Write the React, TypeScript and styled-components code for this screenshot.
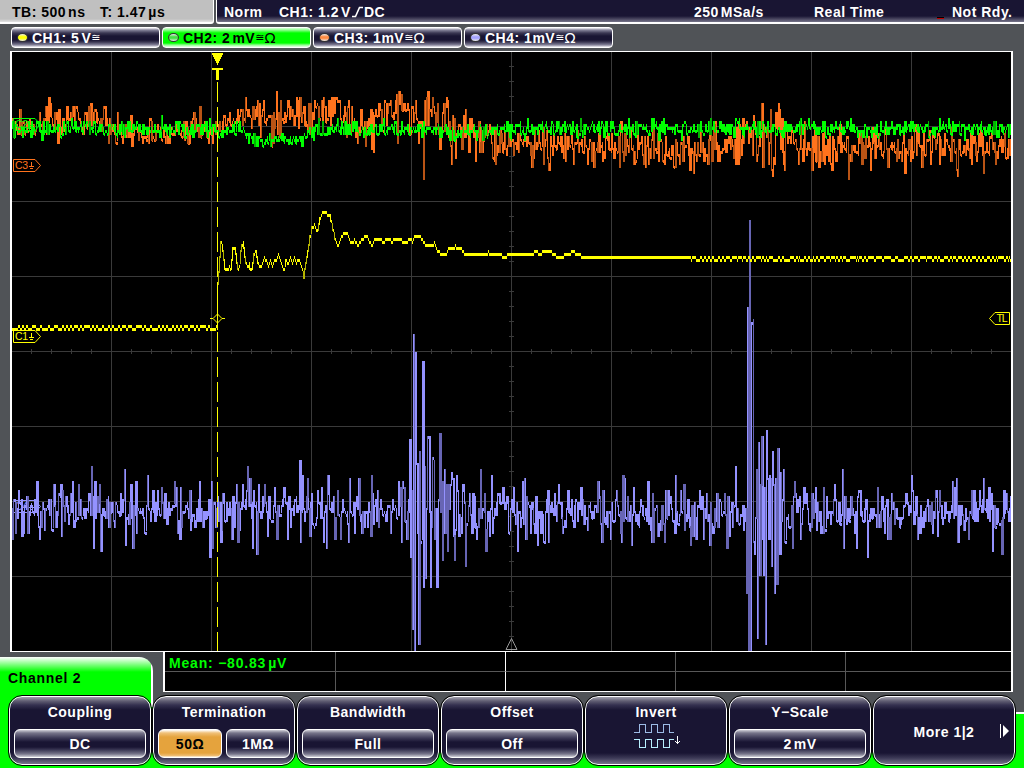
import React from 'react';
import styled, { createGlobalStyle, css } from 'styled-components';

type Point = [number, number]

const LEFT = 12
const RIGHT = 1011
const TOP = 52
const BOTTOM = 651

const NAVY = '#191533'
const GREEN = '#00ff00'
const YELLOW = '#ffff00'
const ORANGE = '#ff731d'
const PURPLE = '#9492ff'

// small seeded generator so the noise is the same on every render
const makeRandom = (seed: number) => () => {
  seed = (seed * 1664525 + 1013904223) % 4294967296
  return seed / 4294967296
}

const interpolate = (points: Point[], x: number) => {
  for (let i = 1; i < points.length; i++) {
    const [x0, y0] = points[i - 1]
    const [x1, y1] = points[i]
    if (x <= x1) return y0 + ((y1 - y0) * (x - x0)) / (x1 - x0)
  }
  return points[points.length - 1][1]
}

// the ADC steps are 3px high
const quantize = (y: number) => Math.round((y - 2) / 3) * 3 + 2

type SignalOptions = {
  mean: Point[]
  amp: Point[]
  spikes: Point[]
  seed: number
}

const noisySignal = ({ mean, amp, spikes, seed }: SignalOptions) => {
  const random = makeRandom(seed)
  const samples: number[] = []
  for (let x = LEFT; x <= RIGHT; x++) {
    const noise = random() + random() + random() - 1.5
    samples.push(interpolate(mean, x) + noise * interpolate(amp, x))
  }
  spikes.forEach(([x, y]) => { samples[x - LEFT] = y })
  return samples
}

// one filled column per pixel, split in a bright and a dim path
const toColumns = (samples: number[], seed: number, dimFrom: number, doubled = 0) => {
  const random = makeRandom(seed)
  let bright = ''
  let dim = ''
  for (let i = 0; i < samples.length - 1; i++) {
    const a = quantize(samples[i])
    const b = quantize(samples[i + 1])
    // a single step is not joined up, only longer jumps are
    const joined = Math.abs(a - b) > 3
    const y0 = (joined ? Math.min(a, b) : a) - 1
    const y1 = (joined ? Math.max(a, b) - 1 : a) + 2
    const w = random() < doubled && i < samples.length - 2 ? 2 : 1
    const d = `M${LEFT + i} ${y0}h${w}V${y1}h-${w}z`
    if (y1 - y0 > dimFrom && random() < 0.4) dim += d
    else bright += d
  }
  return { bright, dim }
}

const CH1_POINTS: Point[] = [
  [217, 327], [218, 285], [219, 272], [221, 242], [223, 250], [225, 270], [227, 270], [229, 266], [231, 270],
  [233, 249], [235, 247], [238, 270], [240, 262], [241, 250], [243, 242], [245, 256], [247, 267], [249, 262],
  [250, 268], [252, 270], [254, 253], [256, 251], [258, 262], [260, 267], [262, 262], [264, 257], [266, 260],
  [268, 265], [270, 261], [272, 265], [274, 261], [276, 260], [278, 254], [280, 260], [282, 265], [284, 270],
  [286, 260], [288, 263], [290, 258], [292, 263], [294, 257], [296, 263], [298, 259], [300, 263], [302, 268],
  [304, 278], [306, 262], [308, 250], [310, 237], [312, 228], [314, 224], [316, 230], [318, 229], [320, 218],
  [322, 213], [326, 213], [328, 215], [330, 216], [332, 225], [334, 234], [336, 242], [338, 245], [340, 238],
  [343, 233], [347, 234], [350, 242], [354, 240], [358, 245], [361, 239], [365, 236], [368, 238], [371, 246],
  [374, 240], [380, 239], [383, 242], [387, 238], [391, 241], [395, 239], [400, 240], [405, 242], [409, 239],
  [412, 241], [414, 237], [420, 237], [423, 242], [426, 245], [431, 245], [434, 243], [437, 251], [442, 254],
  [446, 254], [448, 248], [452, 249], [455, 246], [458, 248], [461, 249], [465, 254], [485, 254], [488, 252],
  [492, 254], [500, 254], [503, 257], [507, 255], [512, 254], [530, 254], [535, 252], [540, 253], [545, 251],
  [550, 251], [554, 254], [557, 257], [562, 257], [567, 253], [574, 252], [580, 255], [584, 257], [640, 257],
  [668, 257], [690, 258], [1011, 258],
]

const ch1Samples = () => {
  const random = makeRandom(41)
  const samples: number[] = []
  let held = 0
  for (let x = LEFT; x <= RIGHT; x++) {
    // the flat parts toggle between two steps every few pixels
    if (x % 2 === 0 && random() < 0.75) held = 3 - held
    if (x < 217) samples.push(326 + held)
    else if (x > 590) samples.push(257 + (x > 690 && random() < 0.8 ? held : 0))
    else samples.push(interpolate(CH1_POINTS, x))
  }
  return samples
}

const CH1 = toColumns(ch1Samples(), 3, 7)

const CH2 = toColumns(noisySignal({
  mean: [[12, 129], [80, 129], [240, 129], [249, 136], [255, 140], [300, 140], [307, 134], [315, 129], [400, 130], [470, 131], [530, 129], [1011, 129]],
  amp: [[12, 8], [240, 8], [255, 5], [300, 5], [320, 8], [1011, 8]],
  spikes: [
    [162, 116], [210, 120], [257, 146], [302, 147], [314, 141], [338, 119], [424, 121], [477, 139], [507, 121],
    [546, 121], [559, 121], [573, 121], [599, 121], [652, 119], [659, 139], [664, 119], [711, 119], [739, 119],
    [760, 121], [801, 119], [823, 121], [886, 121], [911, 121], [959, 121], [965, 141], [997, 138],
  ],
  seed: 22,
}), 8, 12, 0.3)

const CH3 = toColumns(noisySignal({
  mean: [
    [12, 126], [35, 125], [45, 117], [65, 124], [70, 118], [105, 120], [112, 130], [140, 131], [170, 132], [190, 127],
    [215, 128], [230, 118], [275, 118], [300, 115], [320, 114], [332, 108], [345, 118], [370, 130], [380, 116],
    [400, 113], [418, 122], [440, 126], [470, 130], [500, 140], [540, 144], [600, 148], [640, 148], [690, 150],
    [735, 140], [760, 136], [775, 140], [790, 140], [810, 147], [900, 148], [1011, 148],
  ],
  amp: [
    [12, 15], [100, 14], [160, 12], [220, 14], [270, 20], [330, 18], [380, 20], [410, 20], [425, 32], [450, 26],
    [480, 20], [560, 17], [700, 17], [760, 24], [776, 36], [790, 20], [1011, 17],
  ],
  spikes: [
    [49, 97], [50, 103], [52, 118], [58, 142], [67, 106], [73, 106], [91, 103], [105, 106], [109, 144], [118, 112],
    [123, 142], [143, 144], [149, 144], [152, 141], [166, 144], [170, 144], [185, 141], [200, 106], [209, 144],
    [213, 144], [230, 112], [247, 109], [255, 109], [263, 109], [273, 143], [277, 91], [281, 100], [289, 106],
    [300, 97], [311, 103], [324, 97], [334, 97], [337, 100], [340, 101], [352, 106], [358, 142], [361, 109],
    [372, 148], [374, 153], [376, 110], [380, 103], [390, 100], [391, 101], [398, 144], [404, 103], [416, 100],
    [424, 178], [425, 100], [433, 97], [434, 107], [440, 150], [444, 103], [446, 107], [452, 163], [456, 158],
    [466, 109], [469, 153], [472, 118], [476, 160], [496, 163], [510, 135], [532, 166], [549, 169], [550, 165],
    [574, 163], [588, 163], [621, 121], [634, 163], [649, 163], [663, 162], [683, 162], [694, 172], [701, 121],
    [708, 163], [718, 162], [737, 128], [755, 121], [757, 162], [769, 163], [771, 109], [772, 169], [773, 175],
    [775, 163], [779, 103], [780, 110], [782, 118], [785, 169], [799, 165], [805, 121], [825, 163], [840, 124],
    [849, 178], [862, 163], [888, 166], [905, 172], [915, 124], [922, 166], [940, 163], [945, 133], [957, 169],
    [958, 175], [979, 134], [984, 172], [996, 165],
  ],
  seed: 77,
}), 5, 9, 0.35)

const CH4 = toColumns(noisySignal({
  mean: [[12, 511], [400, 511], [415, 500], [450, 514], [1011, 513]],
  amp: [[12, 22], [400, 20], [415, 55], [440, 36], [470, 22], [740, 20], [760, 55], [780, 30], [800, 21], [1011, 21]],
  spikes: [
    [13, 540], [19, 490], [22, 535], [37, 481], [40, 540], [54, 484], [56, 526], [61, 484], [62, 535], [73, 481],
    [79, 484], [92, 466], [94, 549], [95, 481], [100, 484], [101, 552], [109, 528], [125, 469], [126, 546], [131, 484],
    [133, 549], [136, 481], [137, 534], [145, 532], [148, 475], [153, 490], [175, 481], [180, 538], [181, 487],
    [190, 492], [200, 481], [210, 556], [212, 481], [213, 547], [221, 543], [223, 493], [232, 540], [237, 484],
    [238, 543], [243, 484], [248, 466], [250, 478], [253, 547], [257, 555], [259, 484], [265, 486], [268, 537],
    [275, 487], [277, 540], [284, 487], [288, 540], [300, 460], [301, 543], [303, 475], [308, 478], [310, 537],
    [322, 487], [324, 543], [327, 547], [328, 475], [335, 540], [338, 490], [341, 540], [349, 541], [350, 478],
    [355, 533], [359, 478], [362, 534], [371, 535], [372, 475], [378, 490], [391, 532], [399, 481], [402, 541],
    [403, 481], [409, 500], [410, 439], [411, 556], [412, 490], [413, 628], [414, 334], [415, 651], [416, 352],
    [417, 463], [418, 532], [419, 643], [420, 451], [421, 543], [422, 538], [423, 361], [424, 588], [425, 466],
    [426, 577], [427, 508], [428, 436], [429, 436], [430, 513], [431, 588], [432, 526], [433, 457], [434, 460],
    [435, 540], [436, 508], [437, 586], [438, 508], [439, 500], [440, 433], [441, 513], [443, 561], [445, 469],
    [447, 484], [448, 552], [452, 472], [455, 559], [457, 475], [463, 484], [466, 565], [470, 493], [472, 532],
    [477, 540], [481, 469], [485, 493], [486, 550], [490, 537], [492, 475], [503, 487], [509, 532], [514, 487],
    [518, 550], [523, 481], [525, 478], [526, 538], [538, 544], [544, 543], [548, 490], [549, 541], [559, 484],
    [563, 534], [581, 487], [588, 531], [598, 481], [602, 541], [611, 538], [617, 490], [622, 541], [623, 475],
    [625, 478], [632, 544], [634, 487], [648, 481], [652, 541], [665, 541], [666, 490], [676, 475], [684, 484],
    [691, 544], [693, 537], [700, 490], [710, 544], [717, 493], [725, 493], [727, 547], [730, 535], [736, 466],
    [744, 529], [746, 508], [747, 592], [748, 307], [749, 651], [750, 220], [751, 651], [752, 322], [753, 319],
    [754, 541], [755, 553], [756, 517], [757, 469], [758, 637], [759, 442], [760, 574], [761, 484], [762, 436],
    [763, 538], [764, 574], [765, 487], [766, 643], [767, 430], [768, 478], [769, 538], [770, 475], [771, 478],
    [772, 565], [773, 451], [774, 484], [775, 592], [776, 478], [777, 583], [778, 448], [779, 484], [780, 553],
    [781, 472], [784, 469], [785, 541], [793, 547], [795, 481], [801, 538], [804, 487], [816, 487], [824, 487],
    [835, 484], [843, 469], [844, 547], [857, 547], [859, 490], [868, 556], [878, 487], [888, 538], [892, 493],
    [912, 475], [918, 538], [936, 490], [938, 535], [940, 490], [953, 481], [957, 478], [958, 541], [969, 538],
    [975, 490], [984, 478], [989, 487], [993, 550], [1002, 555], [1007, 493],
  ],
  seed: 1204,
}), 9, 14, 0.4)

const gridPath = () => {
  let d = ''
  for (let x = 111; x <= 911; x += 100) d += `M${x + 0.5} ${TOP}V${BOTTOM}`
  for (let y = 126; y <= 576; y += 75) d += `M${LEFT} ${y + 0.5}H${RIGHT}`
  for (let x = 31; x < RIGHT; x += 20) d += `M${x + 0.5} 349V354`
  for (let y = 66; y < BOTTOM; y += 15) d += `M509 ${y + 0.5}H514`
  return d
}

type TraceProps = {
  trace: { bright: string, dim: string }
  color: string
  dimColor: string
}

const Trace = ({ trace, color, dimColor }: TraceProps) => (
  <g shapeRendering="crispEdges">
    <path d={trace.bright} fill={color} />
    <path d={trace.dim} fill={dimColor} />
  </g>
)

const ChannelTag = ({ name, y, color }: { name: string, y: number, color: string }) => (
  <g transform={`translate(13 ${y})`} stroke={color} fill="none">
    <path d="M.5 .5H22l5.500 6l-5.500 6H.5z" />
    <path d="M18.500 3V8M16 7.500H21M17 9.500H20" />
    <TagText x="2" y="10" textLength="13" fill={color}>{name}</TagText>
  </g>
)

const Scope = () => (
  <ScopeSvg viewBox={`${LEFT} ${TOP} ${RIGHT - LEFT} ${BOTTOM - TOP}`}>
    <path d={gridPath()} stroke="#3a3a3a" shapeRendering="crispEdges" />
    <path d="M511.500 638.500L517 649.500H506z" fill="none" stroke="#999" />
    <ChannelTag name="C4" y={500} color={PURPLE} />
    <Trace trace={CH4} color={PURPLE} dimColor="#6765b4" />
    <ChannelTag name="C3" y={159} color={ORANGE} />
    <Trace trace={CH3} color={ORANGE} dimColor="#b95415" />
    <ChannelTag name="C2" y={118} color={GREEN} />
    <Trace trace={CH2} color={GREEN} dimColor="#00b400" />
    <ChannelTag name="C1" y={330} color={YELLOW} />
    <Trace trace={CH1} color={YELLOW} dimColor="#b4b400" />
    <g shapeRendering="crispEdges">
      <path d="M217.500 82V651" stroke={YELLOW} strokeDasharray="20 5" />
      <path d="M217.500 285V330" stroke={YELLOW} />
      <path d="M212 53h11v2h-1v2h-1v2h-1v2h-1v2h-1v2h-1v-2h-1v-2h-1v-2h-1v-2h-1v-2h-1z" fill={YELLOW} />
      <path d="M212 68h11v2h-4v10h-3v-10h-4z" fill={YELLOW} />
    </g>
    <path d="M210 318.500H213M222 318.500H225M217.500 314L222 318.500L217.500 323L213 318.500z" fill="none" stroke={YELLOW} />
    <path d="M1009.500 312.500H995l-5.500 6l5.500 6H1009.500z" fill="none" stroke={YELLOW} />
    <TagText x="996.500" y="322" textLength="11" fill={YELLOW}>TL</TagText>
  </ScopeSvg>
)

type ChannelInfo = {
  name: string
  scale: string
  unit: string
  ohm?: boolean
  color: string
  active?: boolean
}

const CHANNELS: ChannelInfo[] = [
  { name: 'CH1', scale: '5', unit: 'V', color: YELLOW },
  { name: 'CH2', scale: '2', unit: 'mV', ohm: true, color: '#44e044', active: true },
  { name: 'CH3', scale: '1', unit: 'mV', ohm: true, color: '#ff8a40' },
  { name: 'CH4', scale: '1', unit: 'mV', ohm: true, color: '#a3a1ff' },
]

const SoftKey = ({ title, value }: { title: string, value?: React.ReactNode }) => (
  <Key>
    <KeyTitle>{title}</KeyTitle>
    {value && <KeyValues><KeyValue>{value}</KeyValue></KeyValues>}
  </Key>
)

function App() {
  return (
    <>
      <GlobalStyle />
      <Screen>
        <TopBar>
          <TimeBase>
            <span>TB: 500<Thin />ns</span>
            <span>T: 1.47<Thin />µs</span>
          </TimeBase>
          <Status>
            <span>Norm</span>
            <TriggerInfo>
              CH1: 1.2<Thin />V
              <svg width="12" height="12" viewBox="0 0 12 12">
                <path d="M0 10.500H3.500L7.500 1.500H11" fill="none" stroke="#fff" strokeWidth="1.600" />
              </svg>
              DC
            </TriggerInfo>
            <span>250<Thin />MSa/s</span>
            <span>Real Time</span>
            <RunMark />
            <span>Not Rdy.</span>
          </Status>
        </TopBar>

        <ChannelBar>
          {CHANNELS.map(({ name, scale, unit, ohm, color, active }) => (
            <Chip key={name} $active={active}>
              <Led $color={color} />
              <span>{name}: {scale}{scale === '1' ? null : <Thin />}{unit}</span>
              <Symbol $size={11}>≅</Symbol>
              {ohm && <Symbol $size={14.5}>Ω</Symbol>}
            </Chip>
          ))}
        </ChannelBar>

        <ScopeFrame>
          <Scope />
        </ScopeFrame>

        <Bottom>
          <InfoRow>
            <MenuTab>Channel 2</MenuTab>
            <Measurements>
              <Cell>Mean: −80.83<Thin />µV</Cell>
              <Cell $bright />
              <Cell />
              <Cell />
              <Cell />
              <Cell $lower />
              <Cell $lower $bright />
              <Cell $lower />
              <Cell $lower />
              <Cell $lower />
            </Measurements>
          </InfoRow>
          <KeyRow>
            <SoftKey title="Coupling" value="DC" />
            <Key>
              <KeyTitle>Termination</KeyTitle>
              <KeyValues>
                <KeyValue $selected>50Ω</KeyValue>
                <KeyValue>1MΩ</KeyValue>
              </KeyValues>
            </Key>
            <SoftKey title="Bandwidth" value="Full" />
            <SoftKey title="Offset" value="Off" />
            <Key>
              <KeyTitle>Invert</KeyTitle>
              <InvertIcon width="46" height="26" viewBox="0 0 46 26">
                <path d="M0 9.500H5.500V1.500H11.500V9.500H17.500V1.500H23.500V9.500H29.500V1.500H35.500V9.500H40" stroke="#9dbbe6" />
                <path d="M0 16.500H5.500V24.500H11.500V16.500H17.500V24.500H23.500V16.500H29.500V24.500H35.500V16.500H40" stroke="#b9f0ff" />
                <path d="M43.500 13V21M41.500 18.500L43.500 20.500L45.500 18.500" stroke="#fff" />
              </InvertIcon>
            </Key>
            <SoftKey title="Y−Scale" value={<>2<Thin />mV</>} />
            <Key $centered>
              <KeyTitle>More 1|2</KeyTitle>
              <MoreArrow width="9" height="16" viewBox="0 0 9 16">
                <path d="M.5 1V15" stroke="#fff" />
                <path d="M3 2L9 8L3 14z" fill="#fff" />
              </MoreArrow>
            </Key>
          </KeyRow>
        </Bottom>
      </Screen>
    </>
  );
}

const GlobalStyle = createGlobalStyle`
  *{
    box-sizing: border-box;
  }
  body{
    margin: 0;
    background: #505357;
    overflow: hidden;
  }
`;

const Screen = styled.div`
  width: 1024px;
  height: 768px;
  display: flex;
  flex-direction: column;
  overflow: hidden;
  background: #505357;
  color: #fff;
  font: bold 14px/16px "Liberation Sans", Arial, sans-serif;
  letter-spacing: 0.5px;
  white-space: pre;
`;

const Thin = styled.i`
  display: inline-block;
  width: 2px;
`;

const TopBar = styled.header`
  display: flex;
  gap: 2px;
  height: 24px;
  flex: none;
`;

const TimeBase = styled.div`
  width: 214px;
  display: grid;
  grid-template-columns: 88px 1fr;
  padding: 4px 0 0 12px;
  background: linear-gradient(#c0c0c0 19px, #e4e4e4 22px);
  border-right: 1px solid #fff;
  border-bottom: 2px solid #fff;
  border-bottom-right-radius: 3px;
  color: #000;
`;

const Status = styled.div`
  flex: 1;
  display: grid;
  grid-template-columns: 55px 415px 120px 123px 15px 1fr;
  padding: 4px 0 0 7px;
  background: linear-gradient(${NAVY} 16px, #77758a 22px);
  border-left: 1px solid #fff;
  border-bottom: 2px solid #fff;
  border-bottom-left-radius: 3px;
`;

const TriggerInfo = styled.div`
  display: flex;

  svg {
    margin: 2px 0 0 1px;
  }
`;

const RunMark = styled.div`
  width: 7px;
  height: 2px;
  margin-top: 13px;
  background: linear-gradient(#000 50%, #c00000 50%);
`;

const ChannelBar = styled.div`
  display: flex;
  gap: 2px;
  height: 27px;
  flex: none;
  padding: 3px 0 3px 11px;
`;

const Chip = styled.div<{ $active?: boolean }>`
  width: 149px;
  display: flex;
  align-items: center;
  padding-left: 5px;
  border: 1px solid #fff;
  border-radius: 4px;
  background: linear-gradient(#f0f0f4 0, #85839a 2px, #3a3752 5px, ${NAVY} 8px, ${NAVY} 12px, #3a3752 14px, #85839a 17px, #f0f0f4 19px);

  ${({ $active }) => $active && css`
    background: linear-gradient(#d8ffd8 0, #90ff90 2px, ${GREEN} 5px, ${GREEN} 15px, #90ff90 17px, #e8ffe8 19px);
    color: #000;
  `}
`;

const Led = styled.div<{ $color: string }>`
  width: 11px;
  height: 9px;
  margin-right: 4px;
  border: 1px solid #333;
  border-radius: 50%;
  background: linear-gradient(#eee, ${({ $color }) => $color} 40%, ${({ $color }) => $color} 60%, #eee);
`;

const Symbol = styled.span<{ $size: number }>`
  font: ${({ $size }) => $size}px/16px "DejaVu Sans", sans-serif;
  letter-spacing: 0;
`;

const ScopeFrame = styled.main`
  width: 1003px;
  height: 601px;
  flex: none;
  margin-left: 10px;
  background: #000;
  border: solid #fff;
  border-width: 1px 2px 1px 2px;
`;

const ScopeSvg = styled.svg`
  display: block;
  width: 999px;
  height: 599px;
`;

const TagText = styled.text`
  font: normal 10.5px "Liberation Sans", Arial, sans-serif;
  letter-spacing: 0;
  stroke: none;
`;

const Bottom = styled.footer`
  flex: 1;
  display: flex;
  flex-direction: column;
  background: linear-gradient(#505357 60px, #fff 60px, #fff 62px, ${GREEN} 62px);
`;

const InfoRow = styled.div`
  display: flex;
  gap: 10px;
  height: 44px;
`;

// the white edge stops where the soft keys start, the green runs on behind them
const MenuTab = styled.div`
  width: 153px;
  height: 111px;
  flex: none;
  margin-top: 5px;
  padding: 13px 8px 0;
  border-top-right-radius: 14px;
  background:
    linear-gradient(#fff, #fff) right top / 2px 50px no-repeat,
    linear-gradient(#fff 0, #e0ffe0 2px, ${GREEN} 15px);
  color: #000;
  letter-spacing: 0.7px;
`;

const Measurements = styled.div`
  width: 850px;
  height: 40px;
  display: grid;
  grid-template-columns: 171px 170px 170px 170px 1fr;
  grid-template-rows: 20px 1fr;
  background: #000;
  border: solid #fff;
  border-width: 0 2px 1px 2px;
  color: ${GREEN};
  letter-spacing: 0.8px;
`;

const Cell = styled.div<{ $lower?: boolean, $bright?: boolean }>`
  padding: 3px 0 0 4px;
  border-right: 1px solid ${({ $bright }) => ($bright ? '#fff' : '#585858')};
  border-bottom: ${({ $lower }) => ($lower ? 'none' : '1px solid #585858')};

  &:nth-child(5n) {
    border-right: none;
  }
`;

const KeyRow = styled.nav`
  position: relative;
  display: flex;
  gap: 2px;
  padding-left: 9px;
`;

const Key = styled.div<{ $centered?: boolean }>`
  width: 142px;
  height: 69px;
  flex: none;
  display: flex;
  flex-direction: column;
  align-items: center;
  position: relative;
  padding: ${({ $centered }) => ($centered ? '27px' : '7px')} 4px 0;
  border: 1px solid #fff;
  border-radius: 13px;
  outline: 1px solid #000;
  background: linear-gradient(#a2a1ae 0, #615e73 4px, #353150 8px, ${NAVY} 13px, ${NAVY} 56px, #3c3956 61px, #77758a 67px);
`;

const KeyTitle = styled.div`
  text-align: center;
`;

const KeyValues = styled.div`
  display: flex;
  gap: 4px;
  align-self: stretch;
  margin-top: 9px;
`;

const KeyValue = styled.div<{ $selected?: boolean }>`
  flex: 1;
  height: 29px;
  padding-top: 6px;
  border: 1px solid #fff;
  border-radius: 6px;
  text-align: center;
  background: linear-gradient(#d0d0d8 0, #77758a 3px, #3c3956 8px, ${NAVY} 12px, ${NAVY} 17px, #3c3956 20px, #77758a 24px, #d0d0d8 27px);

  ${({ $selected }) => $selected && css`
    background: linear-gradient(#fff 0, #f0c078 3px, #e5a33d 7px, #e5a33d 23px, #f0c078 26px, #fff 27px);
    color: #000;
  `}
`;

const InvertIcon = styled.svg`
  margin: 3px 0 0 2px;
  fill: none;
  shape-rendering: crispEdges;
`;

// sits at the right edge, beside the centred title
const MoreArrow = styled.svg`
  position: absolute;
  right: 5px;
  top: 26px;
`;

export default App;
